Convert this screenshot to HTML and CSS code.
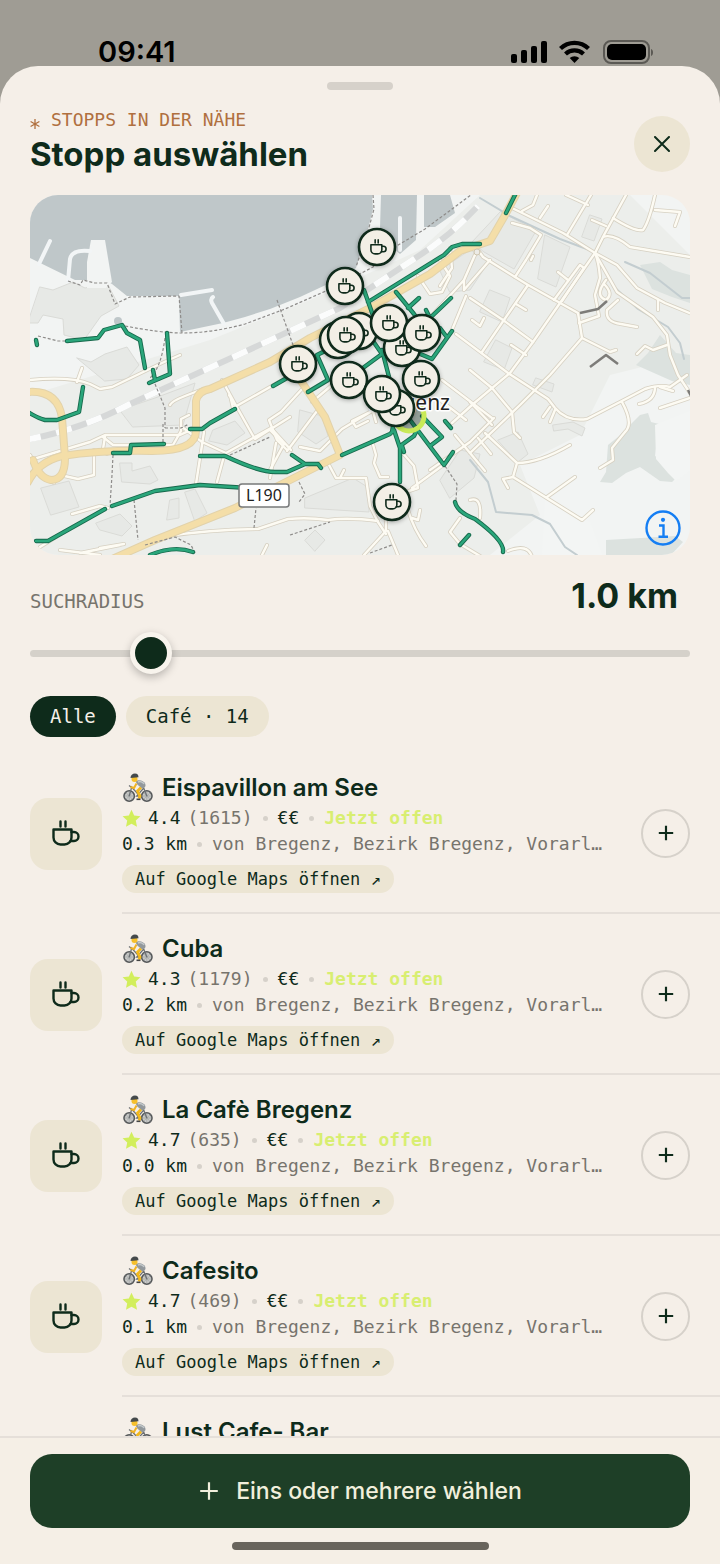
FILE: index.html
```
<!DOCTYPE html>
<html lang="de">
<head>
    <meta charset="UTF-8">
    <meta name="viewport" content="width=device-width, initial-scale=1.0">
    <title>Stopp auswählen</title>
    <link rel="stylesheet" href="styles.css">
</head>
<body>
    <!-- shared icons -->
    <svg class="sprite" aria-hidden="true">
        <symbol id="cup" viewBox="0 0 28 28">
            <path d="M1.5 9.5h18v8a7 7 0 0 1-7 7h-4a7 7 0 0 1-7-7z"/>
            <path d="M19.5 12h2.5a4.5 4.5 0 0 1 0 9h-3.500"/>
            <path d="M8.500 1.500v5M13.500 1.500v5"/>
        </symbol>
        <symbol id="plus" viewBox="0 0 20 20">
            <path d="M10 2v16M2 10h16"/>
        </symbol>
        <symbol id="star" viewBox="0 0 20 20">
            <path d="M10 0.800l2.800 6.100 6.600.8-4.900 4.500 1.300 6.600L10 15.500l-5.800 3.300 1.300-6.600L.6 7.700l6.600-.8z"/>
        </symbol>
        <symbol id="bike" viewBox="0 0 30 30">
            <g fill="#c9cac8" stroke="#55585a" stroke-width="1.600">
                <circle cx="6.200" cy="23" r="5.200"/>
                <circle cx="23.800" cy="23" r="5.200"/>
            </g>
            <path d="M6.200 18v10M1.200 23h10M23.800 18v10M18.800 23h10M2.800 19.500l7 7M9.800 19.500l-7 7M20.300 19.500l7 7M27.300 19.500l-7 7" stroke="#8d9092" stroke-width=".5"/>
            <path d="M6.200 23l2.500-9 8 9h-3l7-8 3.100 8M8 14l-2-1.500" fill="none" stroke="#6d7174" stroke-width="1.300"/>
            <path d="M12.500 8.500c3-2.500 8-1.500 9.700 2.300 1 2.700-.6 4.700-3.700 4.200l-4-3.200z" fill="#92989c"/>
            <path d="M15 9c2-1 5 0 6 2" fill="none" stroke="#c4c9cb" stroke-width="1.500"/>
            <path d="M13.500 10.500l-2.500 4.500-3.500-1" fill="none" stroke="#f0b323" stroke-width="2"/>
            <path d="M18 14.500l-3.500 3.500 2.500 5-1 2.500" fill="none" stroke="#f2b81c" stroke-width="2.800"/>
            <path d="M13.500 26.300h4" stroke="#444" stroke-width="1.600"/>
            <circle cx="11.500" cy="6" r="3" fill="#f6c02c"/>
            <path d="M7.500 5c0-3 2-4.500 4.500-4.500S15.500 2 15.500 4.200z" fill="#44494b"/>
        </symbol>
    </svg>

    <header class="status-bar">
        <span class="clock">09:41</span>
        <svg class="status-icons" viewBox="0 0 144 24" aria-hidden="true">
            <rect x="0" y="14" width="6" height="9" rx="2"/>
            <rect x="10" y="10" width="6" height="13" rx="2"/>
            <rect x="20" y="6" width="6" height="17" rx="2"/>
            <rect x="30" y="1" width="6" height="22" rx="2"/>
            <path d="M49.500 8.500a20 20 0 0 1 28 0M54.500 14a13 13 0 0 1 18 0" fill="none" stroke="#000" stroke-width="4.200"/>
            <path d="M63.500 23l-4.800-4.900a7 7 0 0 1 9.600 0z"/>
            <rect x="93" y="1" width="45" height="22" rx="7" fill="none" stroke="#5b5954" stroke-width="2"/>
            <rect x="96" y="4" width="39" height="16" rx="5"/>
            <path d="M140 9c2.700.6 2.700 6.400 0 7z" fill="#5b5954"/>
        </svg>
    </header>

    <main class="sheet">
        <div class="grabber"></div>

        <div class="sheet-header">
            <div>
                <p class="eyebrow"><svg class="asterisk" viewBox="0 0 10 12" aria-hidden="true"><path d="M5 1v10M.6 3.500l8.800 5M9.400 3.500l-8.800 5"/></svg>STOPPS IN DER NÄHE</p>
                <h1>Stopp auswählen</h1>
            </div>
            <button class="close" aria-label="Schließen">
                <svg viewBox="0 0 16 16" aria-hidden="true"><path d="M1 1l14 14M15 1L1 15"/></svg>
            </button>
        </div>

        <div class="map">
            <svg class="map-canvas" viewBox="30 195 660 360" preserveAspectRatio="xMidYMid slice" role="img" aria-label="Karte von Bregenz">
                <rect class="land" x="30" y="195" width="660" height="360"/>
                <path class="urban" d="M30 395l180-55 100-40 110-50 60-55h150l60 60v100l-80 20-30 60-60 30 20 50-50 40H30z"/>

                <!-- blocks and buildings -->
                <g class="block">
                    <path d="M40 287l13 3 20-8 12 6 22-5 12 23-18 10-17 24-20-5-1-16-20-4-5 8-10 0z"/>
                    <path d="M77 358l14 4 14-8 22-7 12 18-12 14-22 2z"/>
                    <path d="M120 410l35-12 40-15-12 42-50 2z"/>
                    <path d="M41 488l28-7 10 26-28 8z"/>
                    <path d="M120 463l12 0 0 8 18-5 8 14-8 4-28-2z"/>
                    <path d="M213 430l22-9 10 12-18 12-18-4z"/>
                    <path d="M170 500l9-2 0 20-12 2zM185 492l10-3 12 24-12 8z"/>
                    <path d="M96 523l24-9 12 12-10 10-22-6z"/>
                    <path d="M305 498l48-20 16 10 0 24-64-4zM305 540l10-10 10 10-10 11z"/>
                    <path d="M500 212l-28 30 12 10 30 17 22-38z"/>
                    <path d="M545 235l25 12-14 40-18-8zM590 215l12 4-8 22-12-4z"/>
                    <path d="M490 290l20 8-8 24-22-10zM496 340l16 8-8 22-20-8z"/>
                    <path d="M536 378l18 6-2 8-19-7zM498 440l20-8 10 22-10 8z"/>
                    <path d="M553 425l20-3 12 6-3 8-14-7-14 2z"/>
                    <path d="M440 480l20-30 20 4-6 24-24 20z"/>
                    <path d="M300 410l22 6 6 20-12 8-18-12z"/>
                    <path d="M440 270l30-20 20 10-20 30-20 2z"/>
                </g>
                <path class="wood" d="M640 265l20-3 12 8 18 5v28l-18-6-20-8zM608 445l10-8 22-22 8-2 3 9 8 2-4 32 18 10 5 10-6 6-12-1-20-14-14 6-14 10-12-1 6-10zM636 365l12-12 12-18 16 18 14 2v30l-18-4zM606 540l35-2 34-2 8 6-12 13h-65z"/>
                <path class="clearing" d="M655 425l35-14v60l-14 10-8-8-12-14zM545 500l45 22 12 33h-60z"/>

                <!-- lake -->
                <path class="water" d="M30 195h342l1 14-5 20-12 39-26 15-30 14-30 12-25 8-22 6-43 9-1-36-52 0-15-12-8-4-29 0-45-22zM381 195h36l-1 45-16 14-14-12-6-14zM424 195h26l5 18-20 14-11 0z"/>
                <path class="pier-fill" d="M91 240h14l7 42-6 6H87V262z"/>
                <path class="pier" d="M50 241L39 264M90 251q-18-2-20 8l-2 22M181 295l31-5M213 297q-3 2-1 6l12 21M400 218v32"/>
                <circle class="water" cx="118" cy="321" r="4"/>

                <!-- railway -->
                <path class="rail" d="M25 440Q80 430 130 404L240 354 340 308 420 255Q450 236 478 206"/>
                <path class="rail-dash" d="M25 440Q80 430 130 404L240 354 340 308 420 255Q450 236 478 206"/>

                <!-- streams -->
                <path class="stream" d="M480 198l30 18 50 23 32 12M612 285l26 24 30 18 12 16 4 16M625 262l25 11 32 25h8M470 460l18 22 8 30 36 3 18 9 15 23 12 8"/>

                <!-- minor roads, casing first, then fill -->
                <g class="road-casing">
                    <g id="roads">
                        <path d="M510 207l53 26 32 20 22 12 20 23 28 15 27 11"/>
                        <path d="M626 195l-22 40-9 18-35 50-27 39-23 31-38 32-20 18"/>
                        <path d="M478 250l5 7 45 28 50 28 4 25-32 37-30 30-50 48"/>
                        <path d="M582 338l28 14 6-2M470 298l33 22 30 22M528 285l-46 67"/>
                        <path d="M456 334l52 39 40 26 7 9q12 14 32 11l33-17 25-13q15-5 25-2l17-12"/>
                        <path d="M595 253l22 39 36 25 14 18 3 20 8 20 12 18"/>
                        <path d="M603 237q10-4 27 10l60 10M613 218q22 14 30 12 6-8 12-35M655 210l25 2-5 14"/>
                        <path d="M540 218l8-12M567 235l24-40M522 211l11-6 4-10M566 195l22 10M592 220l14 6"/>
                        <path d="M512 223l18 5 11 7-15 25-11 17M533 256l-2 4"/>
                        <path d="M554 300l26-35 4 3-22 33M558 272l10 8M516 304l10 6M511 345l15 10"/>
                        <path d="M595 253q4 10 5 25l-5 17 4 21-20 7M606 280q-12 16 0 20 8-6-2-16M618 300l-11 10q-2 12 14 14l16 3"/>
                        <path d="M637 354l8-8 8 4 14-5M655 387q0 14-16 17M660 387l13 4M658 300v10"/>
                        <path d="M660 408l30-10M550 407l-7 10M555 410l-5 12"/>
                        <path d="M485 433l32 30-4 14 69 43 11-10M517 463q22 0 53-18M547 497l28-20M513 477l-10 2 5 9"/>
                        <path d="M622 402q12 22 3 30l-13 16 1 12-13 8M470 402l22 23M470 370l22 18 20 24 2 20 6 6M478 438l13 16"/>
                        <path d="M450 248l2 20-12 18M440 260l10 16-8 16-12 2-12-18M478 248l-14 32 0 10 26-30M464 280l-38 42M452 330l14-34M472 320l8 6 4-8"/>
                        <path d="M442 380l50 38M440 400l26 20M455 435l30 36M430 470l40-28 24-24"/>
                        <path d="M312 402l26-22M303 388l-22 24-12 8 8 20 10 10M287 451l30-40M276 443l-6 35M300 447l20 4 22-22 30-18M372 411l-20 10 4 6 12-6M370 400l6 22"/>
                        <path d="M328 463l8 15 30 0 4 28 8 16 8 12M340 478l4-8M372 441l4 14-2 8 6 14 8 0M400 450l14 16 4 22-12 4M412 488l30-22"/>
                        <path d="M30 380q40-4 60 4l10 5 12-2 50-24 18-8M77 382l5-14M30 460l60-18 15-7h75q14-6 18-12M103 437l10 8h60l8-14 0-12 8-4"/>
                        <path d="M105 437l-2 12 4 5M30 455l12 20 12 8M60 475l18 4 16-4V450"/>
                        <path d="M170 405q2-4 15-9l18-7M222 380l12 22 18 32 3 5 35-22M230 395l3 13 60-34M235 405l-6-10M182 427l20 15 24 11 45-25 20 22M204 432l-8 52M224 456l-7 26M270 430l14 14-14 26"/>
                        <path d="M72 514l28-8 8 2M60 550l40 5M100 548l24-4M80 553l40-8M168 536q40-6 90-7l30-10q20-2 40 1 20-3 50 1"/>
                        <path d="M386 521l0 10-22 24M388 531l10 24M408 510q6 20 18 36M420 510l-2 10-6-2M470 500q12-4 10 18M460 518l-10 14 10 12 20 12M40 547l16-10M262 555l5-10M508 551q20-8 24 6"/>
                    </g>
                </g>
                <use class="road-fill" href="#roads"/>

                <!-- main roads -->
                <g class="main-casing">
                    <path id="main1" d="M28 482q10-20 34-26 40-6 90-5 44 0 44-20l0-30q2-10 14-12l60-27 40-24 60-30 60-34 30-23 30-10 14-24 14-26"/>
                    <path id="main2" d="M110 560l45-20 80-32 45-23 60-30-15-38-24-36"/>
                    <path id="main3" d="M28 392q30-2 34 26l3 40q0 22-14 22-12-2-18-20"/>
                </g>
                <g class="main-fill">
                    <use href="#main1"/><use href="#main2"/><use href="#main3"/>
                </g>
                <circle class="roundabout" cx="477" cy="252" r="3"/>

                <!-- footpaths -->
                <path class="path" d="M68 281l12 4 3-5 12 3h12l8 21 15-7 49-1 3 37M38 336l20 5h10M120 325q40 8 62 8 30 0 63-9l40-15 50-22 38-20 12-14 40-24 50-37M373 195l1 14-6 22-12 36M277 300l16 45M165 338q-4 30-15 40M155 384l10 24v20M163 424v20M165 428h16l8-4M113 455l-1 20-2 30M134 500l4 40M145 545l30-8 16 8 4 8M254 528l2-20M230 455l40-18M290 535l40-13M370 553l22-8M445 466l12 18-1 16M299 482l6 12-6 8"/>
                <path class="path-dark" d="M590 367l16-12 12 9M580 313l18-4 9-8M688 390l3 6"/>

                <!-- cycle network -->
                <g class="bike-casing">
                    <g id="network">
                        <path d="M37 345l-1-5M67 341l31-3 6-8 18-5 5 8 13 7 5 28M167 333l3 41-21 9M153 370l2 10"/>
                        <path d="M83 387l-4 25-22 8H45q-8-2-17-8M113 453h17l1-8 33-1M190 429h12l8-6 25-14M273 386l14-8"/>
                        <path d="M200 456h25q34 16 50 16h12l18-8h13l3 4M305 464l-13-9M112 506l43-15 45-6 65 4M105 509l-57 32H36M150 555q24-10 43-3"/>
                        <path d="M342 455l48-21 4-4 6 18v34M392 432l2-12M400 446l14-10 4-8M402 446l2 6"/>
                        <path d="M404 412l40 53 9-13M422 416l20 21-12 9M445 421l6 7"/>
                        <path d="M455 502q2 10 20 17 30 22 28 33M460 545l9-10M308 392l20-12-11-25 20-10M352 376l30-22-18-26M382 350l13 50"/>
                        <path d="M368 302l76-47 8-8 10-3h18M396 292l18 22 12 16M408 308l11-10M430 318l21-20M426 310l6 12M364 290l12 34M452 331l-20 28-14-6M440 328l6 8M516 193l-10 20"/>
                    </g>
                </g>
                <use class="bike-fill" href="#network"/>

                <!-- road shield -->
                <rect class="shield" x="239" y="484" width="50" height="23" rx="3"/>
                <text class="shield-text" x="264" y="501">L190</text>

                <circle class="here" cx="409" cy="416" r="15"/>
                <text class="place" x="450" y="410">Bregenz</text>

                <!-- stops -->
                <g class="pin">
                    <g transform="translate(377 247)"><circle r="18"/><use href="#cup" x="-7" y="-8" width="17" height="17"/></g>
                    <g transform="translate(345 286)"><circle r="18"/><use href="#cup" x="-7" y="-8" width="17" height="17"/></g>
                    <g transform="translate(338 340)"><circle r="18"/></g>
                    <g transform="translate(359 331)"><circle r="18"/><use href="#cup" x="-7" y="-8" width="17" height="17"/></g>
                    <g transform="translate(346 335)"><circle r="18"/><use href="#cup" x="-7" y="-8" width="17" height="17"/></g>
                    <g transform="translate(402 348)"><circle r="18"/><use href="#cup" x="-7" y="-8" width="17" height="17"/></g>
                    <g transform="translate(389 323)"><circle r="18"/><use href="#cup" x="-7" y="-8" width="17" height="17"/></g>
                    <g transform="translate(422 333)"><circle r="18"/><use href="#cup" x="-7" y="-8" width="17" height="17"/></g>
                    <g transform="translate(298 364)"><circle r="18"/><use href="#cup" x="-7" y="-8" width="17" height="17"/></g>
                    <g transform="translate(349 380)"><circle r="18"/><use href="#cup" x="-7" y="-8" width="17" height="17"/></g>
                    <g transform="translate(421 379)"><circle r="18"/><use href="#cup" x="-7" y="-8" width="17" height="17"/></g>
                    <g transform="translate(396 408)"><circle r="18"/><use href="#cup" x="-7" y="-8" width="17" height="17"/></g>
                    <g transform="translate(382 394)"><circle r="18"/><use href="#cup" x="-7" y="-8" width="17" height="17"/></g>
                    <g transform="translate(392 502)"><circle r="18"/><use href="#cup" x="-7" y="-8" width="17" height="17"/></g>
                </g>
            </svg>
            <button class="map-info" aria-label="Karteninfo">
                <svg viewBox="0 0 36 36" aria-hidden="true">
                    <circle cx="18" cy="18" r="16.500"/>
                    <path d="M14 15.500h4.500v11M13.500 26.800h9.500"/>
                    <circle class="dot" cx="18" cy="9.800" r="2.100"/>
                </svg>
            </button>
        </div>

        <div class="radius-head">
            <label for="radius">SUCHRADIUS</label>
            <output id="radiusValue" for="radius">1.0 km</output>
        </div>
        <input type="range" id="radius" min="0" max="6.2" step="0.1" value="1">

        <div class="chips">
            <button class="chip active">Alle</button>
            <button class="chip">Café · 14</button>
        </div>

        <ul class="stops">
            <li class="stop">
                <div class="thumb"><svg><use href="#cup"/></svg></div>
                <div class="stop-body">
                    <div class="stop-text">
                        <h2><svg class="bike"><use href="#bike"/></svg>Eispavillon am See</h2>
                        <p class="meta"><svg class="star"><use href="#star"/></svg><b>4.4</b><span class="count">(1615)</span><i class="dot"></i><span>€€</span><i class="dot"></i><strong>Jetzt offen</strong></p>
                        <p class="address"><span>0.3 km</span><i class="dot"></i><span class="place-name">von Bregenz, Bezirk Bregenz, Vorarl…</span></p>
                        <a class="maps-link" href="#">Auf Google Maps öffnen ↗</a>
                    </div>
                    <button class="add" aria-label="Eispavillon am See hinzufügen"><svg><use href="#plus"/></svg></button>
                </div>
            </li>
            <li class="stop">
                <div class="thumb"><svg><use href="#cup"/></svg></div>
                <div class="stop-body">
                    <div class="stop-text">
                        <h2><svg class="bike"><use href="#bike"/></svg>Cuba</h2>
                        <p class="meta"><svg class="star"><use href="#star"/></svg><b>4.3</b><span class="count">(1179)</span><i class="dot"></i><span>€€</span><i class="dot"></i><strong>Jetzt offen</strong></p>
                        <p class="address"><span>0.2 km</span><i class="dot"></i><span class="place-name">von Bregenz, Bezirk Bregenz, Vorarl…</span></p>
                        <a class="maps-link" href="#">Auf Google Maps öffnen ↗</a>
                    </div>
                    <button class="add" aria-label="Cuba hinzufügen"><svg><use href="#plus"/></svg></button>
                </div>
            </li>
            <li class="stop">
                <div class="thumb"><svg><use href="#cup"/></svg></div>
                <div class="stop-body">
                    <div class="stop-text">
                        <h2><svg class="bike"><use href="#bike"/></svg>La Cafè Bregenz</h2>
                        <p class="meta"><svg class="star"><use href="#star"/></svg><b>4.7</b><span class="count">(635)</span><i class="dot"></i><span>€€</span><i class="dot"></i><strong>Jetzt offen</strong></p>
                        <p class="address"><span>0.0 km</span><i class="dot"></i><span class="place-name">von Bregenz, Bezirk Bregenz, Vorarl…</span></p>
                        <a class="maps-link" href="#">Auf Google Maps öffnen ↗</a>
                    </div>
                    <button class="add" aria-label="La Cafè Bregenz hinzufügen"><svg><use href="#plus"/></svg></button>
                </div>
            </li>
            <li class="stop">
                <div class="thumb"><svg><use href="#cup"/></svg></div>
                <div class="stop-body">
                    <div class="stop-text">
                        <h2><svg class="bike"><use href="#bike"/></svg>Cafesito</h2>
                        <p class="meta"><svg class="star"><use href="#star"/></svg><b>4.7</b><span class="count">(469)</span><i class="dot"></i><span>€€</span><i class="dot"></i><strong>Jetzt offen</strong></p>
                        <p class="address"><span>0.1 km</span><i class="dot"></i><span class="place-name">von Bregenz, Bezirk Bregenz, Vorarl…</span></p>
                        <a class="maps-link" href="#">Auf Google Maps öffnen ↗</a>
                    </div>
                    <button class="add" aria-label="Cafesito hinzufügen"><svg><use href="#plus"/></svg></button>
                </div>
            </li>
            <li class="stop">
                <div class="stop-body no-thumb">
                    <div class="stop-text">
                        <h2><svg class="bike"><use href="#bike"/></svg>Lust Cafe- Bar</h2>
                    </div>
                </div>
            </li>
        </ul>

        <footer class="footer">
            <button class="cta"><svg aria-hidden="true"><use href="#plus"/></svg>Eins oder mehrere wählen</button>
            <div class="home-bar"></div>
        </footer>
    </main>

    <script>
        var radius = document.getElementById("radius");
        radius.oninput = function() {
            document.getElementById("radiusValue").textContent = Number(radius.value).toFixed(1) + " km";
        };
    </script>
</body>
</html>
```

FILE: styles.css
```
* {
    box-sizing: border-box;
}

body {
    margin: 0;
    height: 100vh;
    display: flex;
    flex-direction: column;
    background-color: #9f9c94;
    color: #0e2b1b;
    font-family: Inter, "Liberation Sans", sans-serif;
    overflow: hidden;
}

h1, h2, p, ul {
    margin: 0;
    padding: 0;
}

button {
    padding: 0;
    border: none;
    color: inherit;
    font: inherit;
    cursor: pointer;
}

svg {
    display: block;
    flex: none;
}

.sprite {
    position: absolute;
    width: 0;
    height: 0;
}

/* status bar */
.status-bar {
    flex: none;
    display: flex;
    justify-content: space-between;
    align-items: flex-end;
    height: 66px;
    padding: 0 65px 2px 98px;
    color: #000;
}

.clock {
    font-size: 29px;
    font-weight: 600;
    line-height: 24px;
}

.status-icons {
    width: 144px;
    height: 24px;
}

/* sheet */
.sheet {
    flex: 1;
    min-height: 0;
    display: flex;
    flex-direction: column;
    background-color: #f5efe8;
    border-radius: 38px 38px 0 0;
    overflow: hidden;
}

.grabber {
    flex: none;
    align-self: center;
    width: 66px;
    height: 8px;
    margin-top: 16px;
    border-radius: 4px;
    background-color: #d6d1ca;
}

.sheet-header {
    display: flex;
    justify-content: space-between;
    align-items: center;
    padding: 19px 30px 17px;
}

.eyebrow {
    display: flex;
    align-items: center;
    gap: 11px;
    color: #b0703f;
    font-family: "DejaVu Sans Mono", monospace;
    font-size: 18px;
    line-height: 22px;
}

.asterisk {
    width: 10px;
    height: 12px;
    margin-top: 8px;
    fill: none;
    stroke: #b0703f;
    stroke-width: 1.3;
}

h1 {
    font-size: 33px;
    font-weight: 700;
    line-height: 47px;
}

.close {
    display: grid;
    place-items: center;
    width: 56px;
    height: 56px;
    border-radius: 50%;
    background-color: #ece5d3;
}

.close svg {
    width: 16px;
    height: 16px;
    stroke: #0e2b1b;
    stroke-width: 2;
    stroke-linecap: round;
}

/* map */
.map {
    position: relative;
    flex: none;
    margin: 0 30px;
    border-radius: 28px;
    overflow: hidden;
}

.map-canvas {
    width: 100%;
    height: 360px;
    fill: none;
    stroke-linecap: round;
    stroke-linejoin: round;
}

.land { fill: #f2f4f3; }
.urban { fill: #eceeeb; }
.block { fill: #e7e9e6; stroke: #dadbd7; stroke-width: 1; }
.wood { fill: #dce2df; }
.clearing { fill: #f3f5f4; }
.water { fill: #bfc7c9; }
.pier-fill { fill: #f2f4f3; }
.pier { stroke: #f2f5f6; stroke-width: 4; }
.stream { stroke: #c3cdd0; stroke-width: 2; }
.rail { stroke: #d6d8d8; stroke-width: 6; stroke-linecap: butt; }
.rail-dash { stroke: #fbfcfc; stroke-width: 6; stroke-dasharray: 16 16; stroke-linecap: butt; }
.road-casing { stroke: #d6d0c2; stroke-width: 4; }
.road-fill { stroke: #fdfbf3; stroke-width: 2.4; }
.main-casing { stroke: #e2d2aa; stroke-width: 8; }
.main-fill { stroke: #f4dea8; stroke-width: 6; }
.roundabout { fill: #ecebe6; stroke: #cfc6b0; }
.path { stroke: #8e8c8a; stroke-width: 1.2; stroke-dasharray: 3 2; stroke-linecap: butt; }
.path-dark { stroke: #7d7c79; stroke-width: 2.5; stroke-linecap: butt; }
.bike-casing { stroke: #17694c; stroke-width: 4.4; }
.bike-fill { stroke: #2aa67b; stroke-width: 2.6; }

.shield {
    fill: #fff;
    stroke: #77797a;
    stroke-width: 1.5;
}

.shield-text {
    fill: #1c1c1c;
    font-family: "Noto Sans", sans-serif;
    font-size: 16px;
    text-anchor: middle;
}

.place {
    fill: #222;
    stroke: #fff;
    stroke-width: 3;
    paint-order: stroke;
    font-family: "Noto Sans", sans-serif;
    font-size: 21px;
    text-anchor: end;
}

.here {
    fill: rgba(16, 41, 27, 0.4);
    stroke: #c9ea58;
    stroke-width: 5;
}

.pin {
    stroke: #0f2a1b;
    stroke-width: 2.6;
    filter: drop-shadow(0 1px 2px rgba(0, 0, 0, 0.3));
}

.pin circle {
    fill: #f3efe6;
}

.map-info {
    position: absolute;
    right: 9px;
    bottom: 9px;
    width: 36px;
    height: 36px;
    background: none;
}

.map-info svg {
    fill: none;
    stroke: #157ef3;
    stroke-width: 2.4;
}

.map-info .dot {
    fill: #157ef3;
    stroke: none;
}

/* radius */
.radius-head {
    display: flex;
    justify-content: space-between;
    align-items: baseline;
    padding: 19px 42px 0 30px;
}

.radius-head label {
    color: #77746d;
    font-family: "DejaVu Sans Mono", monospace;
    font-size: 19px;
}

.radius-head output {
    font-size: 34px;
    font-weight: 700;
    line-height: 44px;
}

#radius {
    appearance: none;
    flex: none;
    height: 42px;
    margin: 14px 30px 22px;
    background: none;
}

#radius::-webkit-slider-runnable-track {
    height: 7px;
    border-radius: 4px;
    background-color: #d5d1ca;
}

#radius::-webkit-slider-thumb {
    appearance: none;
    width: 42px;
    height: 42px;
    margin-top: -18px;
    border: 5px solid #f8f4ed;
    border-radius: 50%;
    background-color: #0e2b1b;
    box-shadow: 0 3px 8px rgba(0, 0, 0, 0.25);
}

/* chips */
.chips {
    flex: none;
    display: flex;
    gap: 10px;
    padding: 0 30px 16px;
}

.chip {
    height: 41px;
    padding: 0 20px 2px;
    border-radius: 21px;
    background-color: #ece5d3;
    font-family: "DejaVu Sans Mono", monospace;
    font-size: 19px;
}

.chip.active {
    background-color: #0e2b1b;
    color: #f5efe8;
}

/* list */
.stops {
    flex: 1;
    min-height: 0;
    overflow: hidden;
    list-style-type: none;
}

.stop {
    display: flex;
    align-items: center;
    gap: 20px;
    padding-left: 30px;
}

.thumb {
    flex: none;
    display: grid;
    place-items: center;
    width: 72px;
    height: 72px;
    border-radius: 18px;
    background-color: #ece5d3;
}

.thumb svg {
    width: 28px;
    height: 28px;
    fill: none;
    stroke: #0e2b1b;
    stroke-width: 2.4;
    stroke-linecap: round;
    stroke-linejoin: round;
}

.stop-body {
    flex: 1;
    min-width: 0;
    display: flex;
    align-items: center;
    justify-content: space-between;
    padding: 20px 30px 19px 0;
    border-bottom: 2px solid #e5dfd9;
}

.no-thumb {
    margin-left: 92px;
}

.stop-text {
    font-family: "DejaVu Sans Mono", monospace;
    font-size: 18px;
    line-height: 26px;
    white-space: nowrap;
}

h2 {
    display: flex;
    align-items: center;
    gap: 8px;
    margin-bottom: 2px;
    font-family: Inter, "Liberation Sans", sans-serif;
    font-size: 24px;
    font-weight: 600;
    line-height: 30px;
}

.bike {
    width: 32px;
    height: 30px;
}

.meta, .address {
    display: flex;
    align-items: center;
}

.star {
    width: 19px;
    height: 19px;
    margin-right: 7px;
    fill: #d2ee5c;
}

.meta b {
    margin-right: 7px;
    font-weight: 400;
}

.count, .place-name {
    color: #77746d;
}

.stop-text .dot {
    width: 5px;
    height: 5px;
    margin: 0 10px;
    border-radius: 50%;
    background-color: #d6d1ca;
}

.meta strong {
    color: #d8ee71;
}

.maps-link {
    display: inline-block;
    margin-top: 8px;
    padding: 0 13px;
    border-radius: 14px;
    background-color: #ece5d3;
    color: #0e2b1b;
    font-size: 17px;
    line-height: 28px;
    text-decoration: none;
    vertical-align: top;
}

.add {
    flex: none;
    display: grid;
    place-items: center;
    width: 49px;
    height: 49px;
    border: 2px solid #d6d1ca;
    border-radius: 50%;
    background: none;
}

.add svg {
    width: 18px;
    height: 18px;
    stroke: #0e2b1b;
    stroke-width: 2.4;
}

/* footer */
.footer {
    flex: none;
    display: flex;
    flex-direction: column;
    align-items: center;
    gap: 14px;
    padding: 16px 30px 14px;
    border-top: 2px solid #e5dfd9;
    background-color: #f5efe6;
}

.cta {
    display: flex;
    align-items: center;
    justify-content: center;
    gap: 16px;
    width: 100%;
    height: 74px;
    border-radius: 22px;
    background-color: #1e3f27;
    color: #f1efdc;
    font-size: 23px;
    font-weight: 500;
}

.cta svg {
    width: 22px;
    height: 22px;
    stroke: #f1efdc;
    stroke-width: 2;
}

.home-bar {
    width: 257px;
    height: 8px;
    border-radius: 4px;
    background-color: #68645c;
}
```
